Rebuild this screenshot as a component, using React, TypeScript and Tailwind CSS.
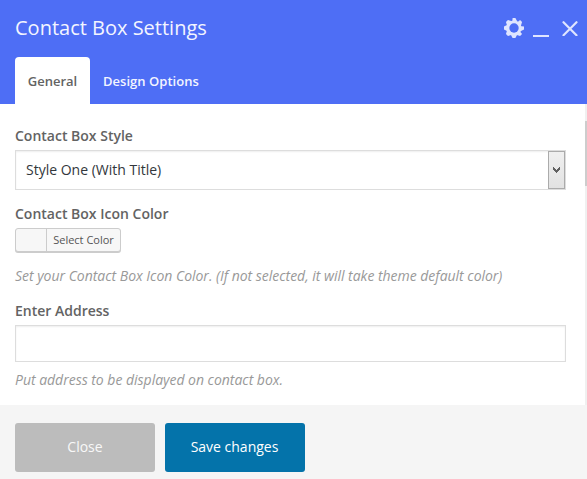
import type { ReactNode } from 'react';

function GearIcon() {
  return (
    <svg className="h-5 w-5" viewBox="-10 -10 20 20" fill="currentColor">
      {[0, 45, 90, 135].map((a) => (
        <path key={a} d="M-1.4 -10 H1.4 L3 -7 V7 L1.4 10 H-1.4 L-3 7 Z" transform={`rotate(${a})`} />
      ))}
      <circle r="7.6" />
      <circle r="4.7" className="fill-[#4e6ef5]" />
    </svg>
  );
}

function Label({ children }: { children: ReactNode }) {
  return <div className="h-5 text-[14px] leading-5 font-semibold text-[#636363]">{children}</div>;
}

function Hint({ children }: { children: ReactNode }) {
  return <p className="h-5 text-[14px] leading-5 tracking-[-0.022px] whitespace-nowrap text-[#999999] italic">{children}</p>;
}

export default function App() {
  return (
    <div className="flex h-[479px] w-[587px] flex-col overflow-hidden bg-white font-['Open_Sans',sans-serif]">
      <header className="flex h-[104px] shrink-0 flex-col justify-between bg-[#4e6ef5]">
        <div className="flex h-[55px] items-center justify-between pr-[9px] pl-[15px]">
          <h1 className="text-[20px] leading-7 text-[#f3f5ff]">Contact Box Settings</h1>
          <div className="flex items-center text-[#dfe5ff]">
            <GearIcon />
            <svg className="ml-[9px] h-5 w-4" viewBox="0 0 16 20" stroke="currentColor" strokeWidth="2">
              <path d="M0 18H16" />
            </svg>
            <svg className="ml-[13px] h-4 w-4" viewBox="0 0 16 16" stroke="currentColor" strokeWidth="2.2" strokeLinecap="round">
              <path d="M1.5 2.2L14.5 15.2M14.5 2.2L1.5 15.2" />
            </svg>
          </div>
        </div>
        <nav className="flex h-[47px] pl-[15px] text-[13px] font-semibold">
          <button className="w-[75px] rounded-t-[4px] bg-white pt-[3px] text-[#636363]">General</button>
          <button className="px-[13px] pt-[3px] tracking-[0.03px] text-[#f3f5ff]">Design Options</button>
        </nav>
      </header>

      <main className="flex h-[301px] shrink-0 justify-between">
        <div className="flex w-[566px] flex-col pt-[22px] pl-[15px]">
          <Label>Contact Box Style</Label>
          <div className="mt-1 flex h-10 items-stretch justify-between border border-[#dddddd] shadow-[inset_0_1px_2px_rgba(0,0,0,0.07)]">
            <span className="pl-[10px] text-[14px] leading-[38px] text-[#32373c]">Style One (With Title)</span>
            <button className="flex w-[17px] items-center justify-center border border-[#ababab] bg-linear-to-b from-[#f0f0f0] to-[#e2e2e2] text-[#606060]">
              <svg className="h-[6px] w-[7px]" viewBox="0 0 7 6" fill="currentColor" shapeRendering="crispEdges">
                <path d="M0 0H1V1H2V2H3V3H4V2H5V1H6V0H7V3H6V4H5V5H4V6H3V5H2V4H1V3H0Z" />
              </svg>
            </button>
          </div>
          <div className="mt-[14px]">
            <Label>Contact Box Icon Color</Label>
          </div>
          <button className="mt-1 flex h-6 w-[106px] items-stretch rounded-[3px] border border-[#cccccc] bg-[#f7f7f7] shadow-[0_1px_0_#cccccc]">
            <span className="w-[31px] border-r border-[#cccccc]" />
            <span className="flex-1 text-center text-[11px] leading-[22px] text-[#555555]">Select Color</span>
          </button>
          <div className="mt-[14px]">
            <Hint>Set your Contact Box Icon Color. (If not selected, it will take theme default color)</Hint>
          </div>
          <div className="mt-[15px]">
            <Label>Enter Address</Label>
          </div>
          <input aria-label="Enter Address" className="mt-1 h-[37px] w-full shrink-0 border border-[#dddddd] bg-white shadow-[inset_0_1px_2px_rgba(0,0,0,0.07)]" />
          <div className="mt-2">
            <Hint>Put address to be displayed on contact box.</Hint>
          </div>
        </div>
        <div className="w-[2px] bg-[#f0f0f0] pt-[17px]">
          <div className="h-[65px] bg-[#cdcdcd]" />
        </div>
      </main>

      <footer className="flex flex-1 items-start gap-[10px] bg-[#f5f5f5] pt-[18px] pl-[15px] text-[14px]">
        <button className="h-[49px] w-[140px] rounded-[3px] bg-[#bcbcbc] pb-[2px] text-[#f8f8f8]">Close</button>
        <button className="h-[49px] w-[140px] rounded-[3px] bg-[#0473aa] pr-px pb-[2px] text-white">Save changes</button>
      </footer>
    </div>
  );
}
